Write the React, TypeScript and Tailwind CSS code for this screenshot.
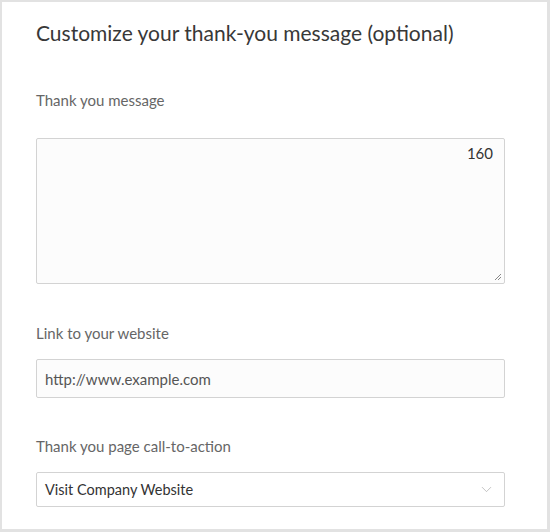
import { ChevronDown } from 'lucide-react'

const font = { fontFamily: "Lato, 'Noto Sans', sans-serif" }

export default function App() {
  return (
    <div
      className="w-[550px] h-[532px] bg-white border-l-2 border-t-2 border-r-[3px] border-b-[3px] border-[#e2e2e2] pl-[34px] pr-[42px] pt-[17px]"
      style={font}
    >
      <h1 className="text-[21px] leading-[28px] text-[#383838]">
        Customize your thank-you message (optional)
      </h1>

      <div className="mt-[43px] text-[15px] leading-[20px] text-[#666]">Thank you message</div>
      <div className="relative mt-[28px]">
        <textarea
          className="block w-full h-[146px] resize-none rounded-[2px] border border-[#d3d3d3] bg-[#fcfcfc] outline-none"
        />
        <span className="absolute right-[12px] top-[4px] text-[15px] text-[#333]">160</span>
        <svg className="absolute right-[3px] bottom-[3px]" width="8" height="8" viewBox="0 0 8 8">
          <path d="M7 1 L1 7 M7 4 L4 7" stroke="#888" strokeWidth="1" />
        </svg>
      </div>

      <div className="mt-[39px] text-[15px] leading-[20px] text-[#666]">Link to your website</div>
      <input
        className="block mt-[16px] w-full h-[39px] rounded-[2px] border border-[#d3d3d3] bg-[#fcfcfc] px-[8px] text-[15px] text-[#555] outline-none"
        defaultValue="http://www.example.com"
      />

      <div className="mt-[38px] text-[15px] leading-[20px] text-[#666]">Thank you page call-to-action</div>
      <div className="mt-[16px] flex items-center justify-between w-full h-[35px] rounded-[2px] border border-[#d3d3d3] bg-white pl-[8px] pr-[9px]">
        <span className="text-[14.5px] text-[#333]">Visit Company Website</span>
        <ChevronDown size={17} strokeWidth={1} color="#aaa" />
      </div>
    </div>
  )
}
